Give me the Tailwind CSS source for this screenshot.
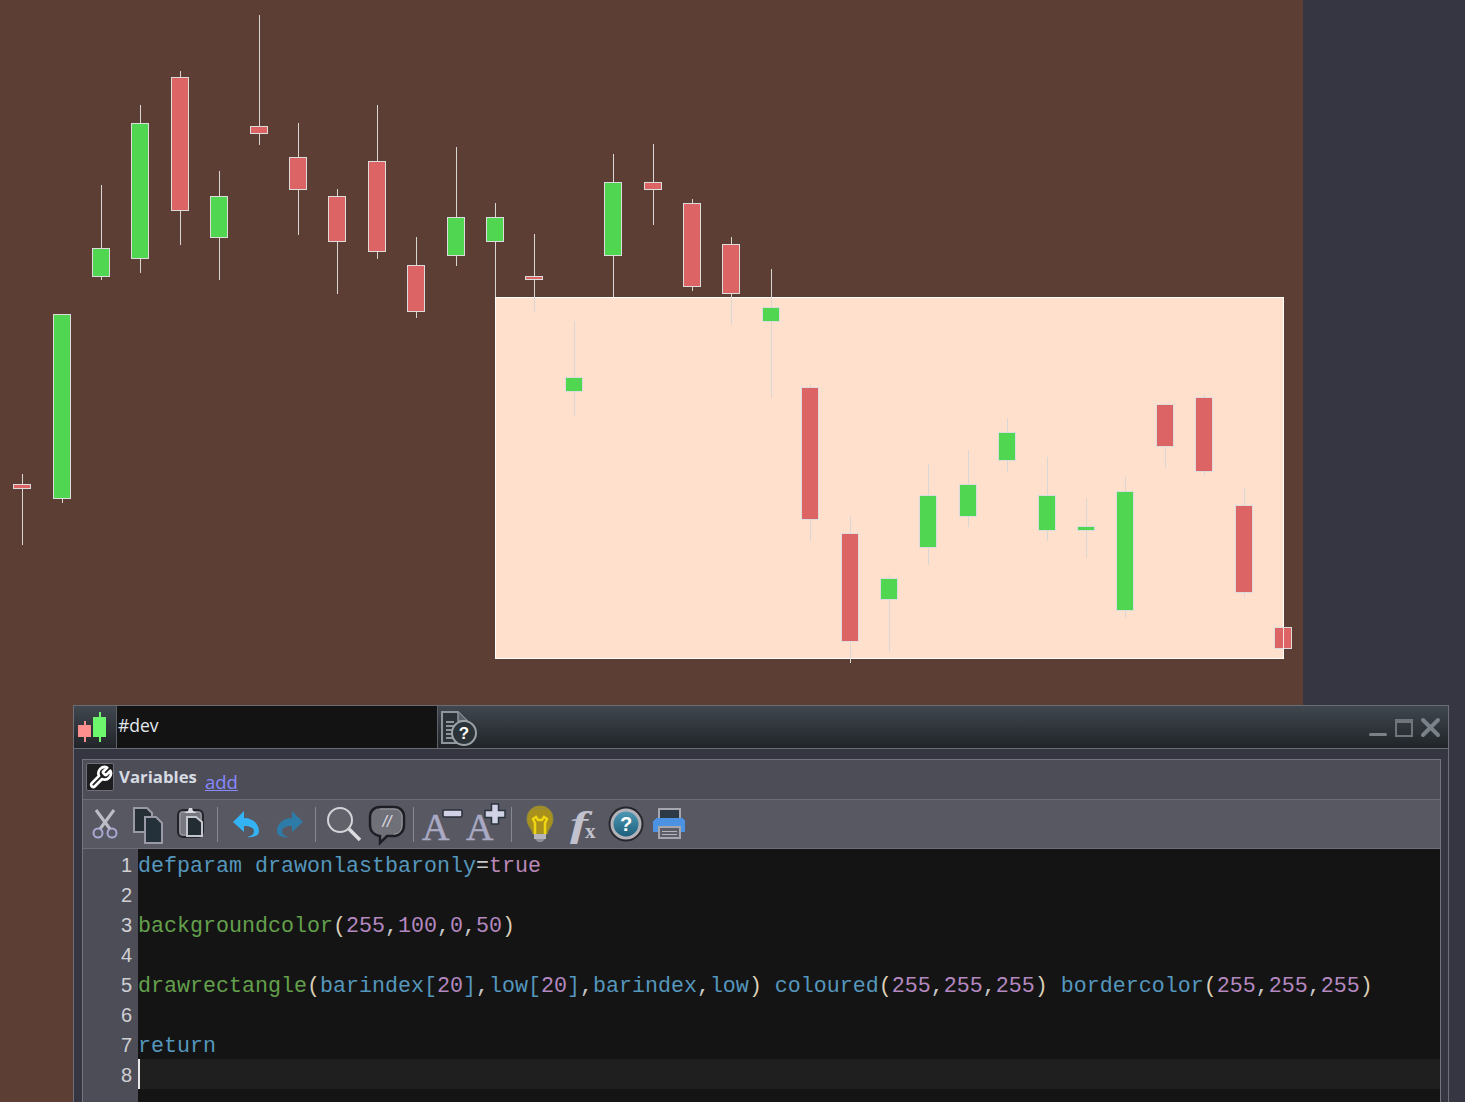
<!DOCTYPE html>
<html lang="en">
<head>
<meta charset="UTF-8">
<title>#dev</title>
<script src="https://cdn.jsdelivr.net/npm/@tailwindcss/browser@4"></script>
</head>
<body class="bg-[#363642] overflow-hidden">
<div class="relative w-[1465px] h-[1102px] overflow-hidden">
  <!-- chart -->
  <div class="relative w-[1303px] h-[1102px] bg-[#5c3e35]">
    <svg id="chart" class="absolute left-0 top-0" width="1303" height="705" viewBox="0 0 1303 705" shape-rendering="crispEdges"></svg>
  </div>

  <!-- code window, runs past the bottom of the page -->
  <div class="absolute left-[73px] top-[705px] w-[1376px] h-[430px] flex flex-col border-x border-[#6d6f78] bg-[#363642]">
    <div class="flex h-[44px] shrink-0 border-y border-[#686d74] bg-gradient-to-b from-[#40474e] to-[#21252a]">
      <div class="w-[43px] pl-[3px] flex items-center border-r border-[#5d6269]">
        <svg width="30" height="32" viewBox="0 0 30 32" shape-rendering="crispEdges">
          <rect x="7" y="10" width="2" height="21" fill="#ff8f8f"/>
          <rect x="1" y="14" width="13" height="12" fill="#ff8f8f"/>
          <rect x="22" y="1" width="2" height="30" fill="#6cf76c"/>
          <rect x="16" y="6" width="13" height="20" fill="#6cf76c"/>
        </svg>
      </div>
      <div class="w-[320px] bg-[#131313] text-[#e3e9ef] text-[17.5px] leading-[38px] pl-px font-['Open_Sans',sans-serif]">#dev</div>
      <div class="w-[1px] bg-[#5d6269]"></div>
      <svg class="ml-[3px] mt-[4px]" width="38" height="36" viewBox="0 0 38 36">
        <path d="M1 2h16l9 9v22H1z" fill="#2b3339" stroke="#8e969c" stroke-width="2"/>
        <path d="M17 2v9h9" fill="#59616a" stroke="#8e969c" stroke-width="1.5"/>
        <path d="M5 12h8M5 16h8M5 20h7M5 24h7M5 28h8" stroke="#8e969c" stroke-width="2"/>
        <circle cx="23" cy="23" r="12" fill="#2b3339" stroke="#9aa1a7" stroke-width="2"/>
        <text x="23" y="29" text-anchor="middle" font-family="Liberation Sans" font-weight="700" font-size="17" fill="#ffffff">?</text>
      </svg>
      <div class="flex-1"></div>
      <svg class="mr-[7px] mt-[11px]" width="72" height="22" viewBox="0 0 72 22">
        <rect x="0" y="16" width="18" height="3" rx="1.5" fill="#7b8189"/>
        <rect x="27" y="3" width="16" height="16" fill="none" stroke="#6f757d" stroke-width="2"/>
        <rect x="26" y="2" width="18" height="4" fill="#6f757d"/>
        <path d="M54 3l15 15M69 3L54 18" stroke="#7b8189" stroke-width="4" stroke-linecap="round"/>
      </svg>
    </div>

    <div class="flex-1 min-h-0 pl-[8px] pr-[7px] pt-[10px]">
      <div class="h-full flex flex-col border border-[#74747f]">
        <div class="h-[39px] shrink-0 flex bg-[#4d4d58]">
          <div class="ml-[3px] mt-[3px] w-[28px] h-[28px] flex items-center justify-center rounded-[2px] bg-[#1d1d1f] border border-[#70707a]">
            <svg width="25" height="25" viewBox="0 0 24 24" fill="none" stroke="#ffffff" stroke-width="2.6" stroke-linecap="round" stroke-linejoin="round"><path d="M14.7 6.3a1 1 0 0 0 0 1.4l1.6 1.6a1 1 0 0 0 1.4 0l3.77-3.77a6 6 0 0 1-7.94 7.94l-6.91 6.91a2.12 2.12 0 0 1-3-3l6.91-6.91a6 6 0 0 1 7.94-7.94l-3.76 3.76z"/></svg>
          </div>
          <div class="ml-[5px] mt-[3px] text-[16.8px] leading-[28px] font-bold text-[#d6dae2] font-['Open_Sans',sans-serif]">Variables</div>
          <a class="ml-[8px] mt-[8px] text-[18.5px] leading-[28px] text-[#8888ff] underline font-['Open_Sans',sans-serif]">add</a>
        </div>

        <div class="h-[50px] shrink-0 flex items-center border-y border-[#6d6d78] bg-[#585863]">
          <svg class="ml-[8px] overflow-visible" width="28" height="40" viewBox="0 0 28 40">
            <path d="M5 6l14 19 M23 6L9 25" stroke="#bdbdc6" stroke-width="3"/>
            <circle cx="7" cy="29" r="4.5" fill="none" stroke="#a9a9d2" stroke-width="2"/>
            <circle cx="21" cy="29" r="4.5" fill="none" stroke="#a9a9d2" stroke-width="2"/>
          </svg>
          <svg class="ml-[13px] overflow-visible" width="32" height="40" viewBox="0 0 32 40">
            <path d="M2 4h13l5 5v19H2z" fill="#262f36" stroke="#9a9aa6" stroke-width="2"/>
            <path d="M13 13h11l6 6v20H13z" fill="#24303a" stroke="#9a9aa6" stroke-width="2"/>
          </svg>
          <svg class="ml-[12px] overflow-visible" width="29" height="40" viewBox="0 0 29 40">
            <rect x="2" y="6" width="25" height="27" rx="5" fill="#787880" stroke="#24242b" stroke-width="2"/>
            <rect x="4" y="8" width="21" height="23" rx="3" fill="none" stroke="#9b9ba3" stroke-width="1"/>
            <path d="M8 9l4-2 1-3h3l1 3 4 2z" fill="#d8d8de"/>
            <path d="M11 13h9l6 5v14H11z" fill="#232c32" stroke="#c4c4cc" stroke-width="2"/>
          </svg>
          <div class="ml-[12px] w-px h-[35px] bg-[#888892]"></div>
          <svg class="ml-[14px] overflow-visible" width="30" height="40" viewBox="0 0 30 40">
            <path d="M1 18L12 7v7c9 0 15 6 15 13 0 5-6 7-12 6 5-1 7-3 7-6 0-3-4-5-10-5v6z" fill="#33b2f4"/>
          </svg>
          <svg class="ml-[12px] overflow-visible" width="30" height="40" viewBox="0 0 30 40">
            <path d="M29 18L18 7v7c-9 0-15 6-15 13 0 5 6 7 12 6-5-1-7-3-7-6 0-3 4-5 10-5v6z" fill="#2d7ca8"/>
          </svg>
          <div class="ml-[11px] w-px h-[35px] bg-[#888892]"></div>
          <svg class="ml-[10px] overflow-visible" width="36" height="40" viewBox="0 0 36 40">
            <circle cx="14" cy="16" r="12" fill="#62626b" stroke="#d4d4d8" stroke-width="2"/>
            <path d="M23 25l11 11" stroke="#dcdce0" stroke-width="3.5"/>
          </svg>
          <svg class="ml-[6px] overflow-visible" width="38" height="40" viewBox="0 0 38 40">
            <path d="M12 3h14c6 0 10 4 10 10v8c0 6-4 11-10 11H19l-7 7v-7c-6-1-10-5-10-11v-8C2 7 6 3 12 3z" fill="#707079" stroke="#1d1d24" stroke-width="2.5"/>
            <path d="M12 5h14c5 0 8 3 8 8v8c0 5-3 9-8 9" fill="none" stroke="#9b9ba3" stroke-width="1"/>
            <text x="19" y="23" text-anchor="middle" font-family="Liberation Sans" font-style="italic" font-size="16" fill="#dedee4">//</text>
          </svg>
          <div class="ml-[7px] w-px h-[35px] bg-[#888892]"></div>
          <svg class="ml-[7px] overflow-visible" width="42" height="40" viewBox="0 0 42 40">
            <text x="1" y="36" font-family="Liberation Serif" font-size="38" fill="#aaaac4" stroke="#aaaac4" stroke-width="0.5">A</text>
            <rect x="22" y="6" width="19" height="7" rx="1.5" fill="#d2d2e6" stroke="#2a2f3a" stroke-width="1.5"/>
          </svg>
          <svg class="ml-[2px] overflow-visible" width="42" height="40" viewBox="0 0 42 40">
            <text x="1" y="36" font-family="Liberation Serif" font-size="38" fill="#aaaac4" stroke="#aaaac4" stroke-width="0.5">A</text>
            <path d="M26.500 0h7v6.500h6.500v7h-6.500v6.500h-7v-6.500h-6.500v-7h6.500z" fill="#d2d2e6" stroke="#2a3440" stroke-width="1.500"/>
          </svg>
          <div class="ml-[4px] w-px h-[35px] bg-[#888892]"></div>
          <svg class="ml-[12px] overflow-visible" width="32" height="40" viewBox="0 0 32 40">
            <path d="M16 2c8 0 13 6 13 13 0 7-5 10-6 15H9c-1-5-6-8-6-15C3 8 8 2 16 2z" fill="#a8911c" stroke="#8f8a3c" stroke-width="1"/>
            <path d="M8 6c3-3 12-3 16 0-3-1-13-1-16 0z" fill="#978a3a"/>
            <path d="M11 30V19l-2-4 3-2 2 3h4l2-3 3 2-2 4v11" fill="none" stroke="#f0d612" stroke-width="2.500"/>
            <rect x="10" y="30" width="12" height="5" fill="#b4b4bc"/>
            <path d="M11 35h10l-3 3h-4z" fill="#8e8e98"/>
          </svg>
          <svg class="ml-[10px] overflow-visible" width="32" height="40" viewBox="0 0 32 40">
            <text transform="translate(4 32) scale(1.5 1)" font-family="Liberation Serif" font-style="italic" font-weight="700" font-size="36" fill="#c2c2cf">f</text>
            <text x="19" y="34" font-family="Liberation Serif" font-weight="700" font-size="21" fill="#c2c2cf">x</text>
          </svg>
          <svg class="ml-[9px] overflow-visible" width="38" height="40" viewBox="0 0 38 40">
            <defs><linearGradient id="helpfill" x1="0" y1="0" x2="0" y2="1"><stop offset="0" stop-color="#4d99b4"/><stop offset="1" stop-color="#1d5f7c"/></linearGradient></defs>
            <circle cx="19" cy="20" r="17.500" fill="#26262c"/>
            <circle cx="19" cy="20" r="15.500" fill="#b2b2b8"/>
            <circle cx="19" cy="20" r="12.500" fill="url(#helpfill)"/>
            <text x="19" y="27" text-anchor="middle" font-family="Liberation Sans" font-weight="700" font-size="20" fill="#ffffff">?</text>
          </svg>
          <svg class="ml-[6px] overflow-visible" width="36" height="40" viewBox="0 0 36 40" shape-rendering="crispEdges">
            <rect x="8" y="5" width="21" height="10" fill="#2d3a46" stroke="#a6a6ae" stroke-width="2"/>
            <path d="M5 14h26l3 3v11H2V17z" fill="#4b92e2"/>
            <rect x="8" y="23" width="21" height="11" fill="#5e5e68" stroke="#a6a6ae" stroke-width="2"/>
            <path d="M11 27h15M11 30h15" stroke="#b4b4ba" stroke-width="1"/>
          </svg>
        </div>

        <div class="flex-1 min-h-0 flex text-[21.67px] font-['Liberation_Mono',monospace]">
          <div class="w-[55px] shrink-0 bg-[#4d4d58] pt-px pr-[6px] text-right text-[#cfcfd4] text-[20px] leading-[30px] font-['Liberation_Sans',sans-serif]">
            <div>1</div><div>2</div><div>3</div><div>4</div><div>5</div><div>6</div><div>7</div><div>8</div>
          </div>
          <div class="flex-1 bg-[#141414] text-[#5597bd] leading-[36px]">
            <div class="h-[30px] whitespace-pre">defparam drawonlastbaronly<span class="text-[#c8c8c8]">=</span><span class="text-[#b988b8]">true</span></div>
            <div class="h-[30px]"></div>
            <div class="h-[30px] whitespace-pre"><span class="text-[#64a04c]">backgroundcolor</span><span class="text-[#dccfb6]">(</span><span class="text-[#b488c0]">255</span><span class="text-[#c8c8c8]">,</span><span class="text-[#b488c0]">100</span><span class="text-[#c8c8c8]">,</span><span class="text-[#b488c0]">0</span><span class="text-[#c8c8c8]">,</span><span class="text-[#b488c0]">50</span><span class="text-[#dccfb6]">)</span></div>
            <div class="h-[30px]"></div>
            <div class="h-[30px] whitespace-pre"><span class="text-[#64a04c]">drawrectangle</span><span class="text-[#dccfb6]">(</span>barindex[<span class="text-[#b488c0]">20</span>]<span class="text-[#c8c8c8]">,</span>low[<span class="text-[#b488c0]">20</span>]<span class="text-[#c8c8c8]">,</span>barindex<span class="text-[#c8c8c8]">,</span>low<span class="text-[#dccfb6]">)</span> coloured<span class="text-[#dccfb6]">(</span><span class="text-[#b488c0]">255</span><span class="text-[#c8c8c8]">,</span><span class="text-[#b488c0]">255</span><span class="text-[#c8c8c8]">,</span><span class="text-[#b488c0]">255</span><span class="text-[#dccfb6]">)</span> bordercolor<span class="text-[#dccfb6]">(</span><span class="text-[#b488c0]">255</span><span class="text-[#c8c8c8]">,</span><span class="text-[#b488c0]">255</span><span class="text-[#c8c8c8]">,</span><span class="text-[#b488c0]">255</span><span class="text-[#dccfb6]">)</span></div>
            <div class="h-[30px]"></div>
            <div class="h-[30px] whitespace-pre">return</div>
            <div class="h-[30px] bg-[#1f1f1f] border-l-2 border-[#e8e8e8]"></div>
          </div>
        </div>
      </div>
    </div>
  </div>
</div>

<script>
// box left, box top, box bottom, wick top, wick bottom, colour
const candles = [
  [13,484,489,474,545,'r'],[53,314,499,314,503,'g'],[92,248,277,185,280,'g'],[131,123,259,105,273,'g'],
  [171,77,211,71,245,'r'],[210,196,238,171,280,'g'],[250,126,134,15,145,'r'],[289,157,190,123,235,'r'],
  [328,196,242,189,294,'r'],[368,161,252,105,259,'r'],[407,265,312,237,318,'r'],[447,217,256,147,266,'g'],
  [486,217,242,203,297,'g'],[525,276,280,234,312,'r'],[565,377,392,321,416,'g'],[604,182,256,154,297,'g'],
  [644,182,190,144,225,'r'],[683,203,287,199,291,'r'],[722,244,294,237,325,'r'],[762,307,322,269,398,'g'],
  [801,387,520,384,541,'r'],[841,533,642,516,663,'r'],[880,578,600,575,652,'g'],[919,495,548,464,565,'g'],
  [959,484,517,450,527,'g'],[998,432,461,418,472,'g'],[1038,495,531,457,541,'g'],[1077,526,531,498,558,'g'],
  [1116,491,611,477,618,'g'],[1156,404,447,404,468,'r'],[1195,397,472,394,475,'r'],[1235,505,593,488,597,'r'],
  [1274,627,649,627,649,'r']
];
const chart = document.getElementById('chart');
function add(tag, attrs) {
  const el = document.createElementNS('http://www.w3.org/2000/svg', tag);
  for (const k in attrs) el.setAttribute(k, attrs[k]);
  chart.appendChild(el);
}
add('rect', {x: 495.5, y: 297.5, width: 788, height: 361, fill: '#fee0cd', stroke: '#ffffff'});
candles.forEach(([x, top, bottom, wickTop, wickBottom, c]) => {
  add('rect', {x: x + 9, y: wickTop, width: 1, height: wickBottom - wickTop, fill: '#d9d6d4'});
  add('rect', {x: x + 0.5, y: top + 0.5, width: 17, height: bottom - top - 1,
    fill: c === 'g' ? '#50d650' : '#dd6464', stroke: '#dcdcdc'});
});
add('rect', {x: 1283, y: 628, width: 1, height: 21, fill: '#f5e6e0'});
</script>
</body>
</html>
